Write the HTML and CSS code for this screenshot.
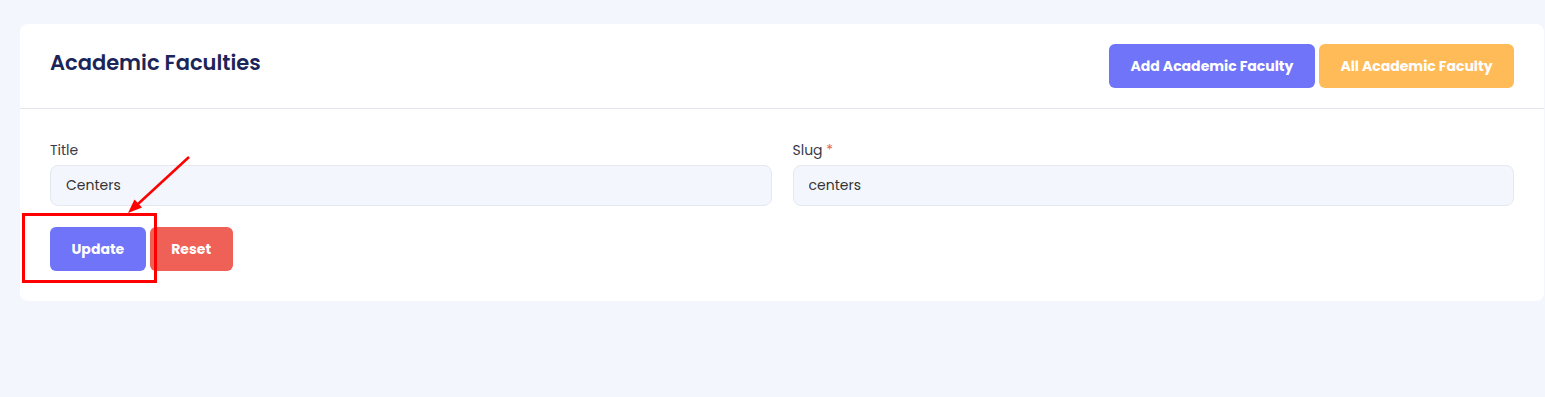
FILE: index.html
```html
<!DOCTYPE html>
<html lang="en">
<head>
<meta charset="utf-8">
<title>Academic Faculties</title>
<link rel="stylesheet" href="styles.css">
</head>
<body>
<div class="page">
  <div class="card">
    <div class="card-header">
      <h1 class="card-title">Academic Faculties</h1>
      <div class="header-actions">
        <button class="btn btn-primary">Add Academic Faculty</button>
        <button class="btn btn-warning">All Academic Faculty</button>
      </div>
    </div>
    <div class="card-body">
      <div class="form-row">
        <div class="field">
          <label class="field-label">Title</label>
          <input class="field-input" type="text" value="Centers">
        </div>
        <div class="field">
          <label class="field-label">Slug <span class="req">*</span></label>
          <input class="field-input" type="text" value="centers">
        </div>
      </div>
      <div class="form-actions">
        <button class="btn btn-primary">Update</button>
        <button class="btn btn-danger">Reset</button>
      </div>
    </div>
    <div class="annot-box"></div>
    <svg class="annot-arrow" width="80" height="70" viewBox="0 0 80 70">
      <line x1="69" y1="7" x2="18" y2="54" stroke="#ff0000" stroke-width="2.5"/>
      <polygon points="8,63 14.5,49.5 22,57.5" fill="#ff0000"/>
    </svg>
  </div>
</div>
</body>
</html>
```
FILE: styles.css
```css
* { box-sizing: border-box; }
html, body { margin: 0; padding: 0; }
body {
  background: #f3f6fd;
  font-family: "Poppins", "Inter", "Noto Sans", sans-serif;
  color: #333;
}
.page {
  padding: 24px 1px 0 20px;
}
.card {
  position: relative;
  background: #fff;
  border-radius: 8px;
}
.card-header {
  display: flex;
  justify-content: space-between;
  align-items: flex-start;
  padding: 20px 30px 20px 30px;
  border-bottom: 1px solid #e3e6ec;
}
.card-title {
  margin: 0;
  padding-top: 6px;
  font-size: 21px;
  font-weight: 600;
  line-height: 26px;
  color: #1b2559;
}
.header-actions {
  display: flex;
  gap: 4px;
}
.btn {
  border: none;
  border-radius: 6px;
  height: 44px;
  padding: 0 21.5px;
  font-family: inherit;
  font-size: 14px;
  font-weight: 700;
  color: #fff;
  cursor: pointer;
}
.btn-primary { background: #6f74f9; }
.btn-warning { background: #ffbb57; }
.btn-danger { background: #ef6057; }
.card-body {
  padding: 30px;
}
.form-row {
  display: grid;
  grid-template-columns: 1fr 1fr;
  gap: 21px;
}
.field {
  display: flex;
  flex-direction: column;
}
.field-label {
  font-size: 14px;
  line-height: 22px;
  color: #3a3a4a;
  margin-bottom: 4px;
}
.req { color: #f0643a; }
.field-input {
  height: 41px;
  border: 1px solid #e4e8f0;
  border-radius: 8px;
  background: #f3f6fd;
  padding: 0 15px;
  font-family: inherit;
  font-size: 14px;
  color: #333;
  outline: none;
}
.form-actions {
  display: flex;
  gap: 4px;
  margin-top: 21px;
}
.annot-box {
  position: absolute;
  left: 2px;
  top: 189px;
  width: 135px;
  height: 70px;
  border: 3px solid #ff0000;
}
.annot-arrow {
  position: absolute;
  left: 100px;
  top: 126px;
}
```
